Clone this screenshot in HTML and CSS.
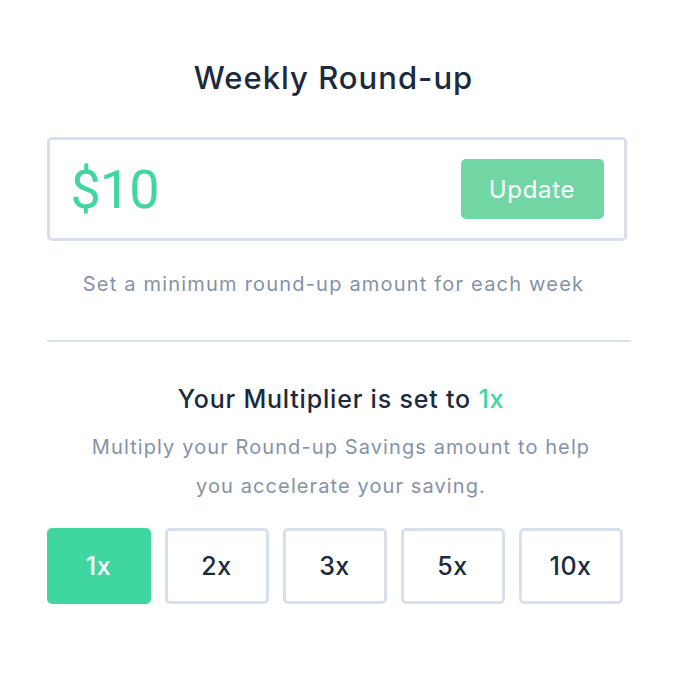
FILE: index.html
```html
<!DOCTYPE html>
<html lang="en">
<head>
    <meta charset="UTF-8">
    <meta name="viewport" content="width=device-width, initial-scale=1.0">
    <title>Weekly Round-up</title>
    <link rel="stylesheet" href="styles.css">
</head>
<body>
    <main class="panel">
        <h1 class="title">Weekly Round-up</h1>

        <!-- amount input -->
        <div class="amount-box">
            <span class="amount">$10</span>
            <button class="update-btn">Update</button>
        </div>
        <p class="hint">Set a minimum round-up amount for each week</p>

        <hr class="divider">

        <!-- multiplier -->
        <h2 class="multi-title">Your Multiplier is set to <span class="accent">1x</span></h2>
        <p class="multi-text">Multiply your Round-up Savings amount to help<br>you accelerate your saving.</p>

        <div class="multi-options">
            <div class="option active">1x</div>
            <div class="option">2x</div>
            <div class="option">3x</div>
            <div class="option">5x</div>
            <div class="option">10x</div>
        </div>
    </main>
</body>
</html>
```

FILE: styles.css
```css
/* reset */
* {
    margin: 0;
    padding: 0;
    box-sizing: border-box;
}

body {
    background: #fff;
    font-family: "Inter", "Noto Sans", sans-serif;
    color: #1b2a3d;
}

.panel {
    width: 584px;
    margin: 0 auto;
    padding-top: 56px;
    display: flex;
    flex-direction: column;
    align-items: center;
}

.title {
    font-size: 31px;
    font-weight: 500;
    letter-spacing: 1px;
    line-height: 44px;
    margin: 0 10px 37px 0;
}

/* amount input */
.amount-box {
    width: 580px;
    height: 104px;
    align-self: flex-start;
    border: 3px solid #d8e1eb;
    border-radius: 5px;
    display: flex;
    align-items: center;
    justify-content: space-between;
    padding: 0 20px 0 21px;
}

.amount {
    font-family: "Roboto", sans-serif;
    font-size: 54px;
    color: #3fd69f;
    letter-spacing: -1px;
}

.update-btn {
    width: 143px;
    height: 60px;
    border: none;
    border-radius: 5px;
    background: #72d5a4;
    color: #fff;
    font-family: inherit;
    font-size: 24px;
    letter-spacing: 0.7px;
}

.hint {
    margin: 31px 10px 0 0;
    font-size: 20px;
    letter-spacing: 1.2px;
    color: #8592a8;
}

.divider {
    width: 100%;
    border: none;
    border-top: 2px solid #d8e1eb;
    margin: 44px 0 40px;
}

.multi-title {
    margin-left: 5px;
    font-size: 25px;
    font-weight: 500;
    letter-spacing: 0.8px;
    line-height: 34px;
}

.accent {
    color: #3fd69f;
}

.multi-text {
    margin: 12px 0 0 5px;
    font-size: 20px;
    letter-spacing: 1.1px;
    line-height: 39px;
    text-align: center;
    color: #8592a8;
}

/* multiplier buttons */
.multi-options {
    width: 100%;
    margin-top: 22px;
    display: grid;
    grid-template-columns: repeat(5, 104px);
    gap: 14px;
}

.option {
    height: 76px;
    border: 3px solid #d8e1eb;
    border-radius: 5px;
    display: flex;
    align-items: center;
    justify-content: center;
    font-size: 25px;
    font-weight: 500;
    letter-spacing: 0.5px;
}

.option.active {
    background: #3fd69f;
    border-color: #3fd69f;
    color: #fff;
}
```
